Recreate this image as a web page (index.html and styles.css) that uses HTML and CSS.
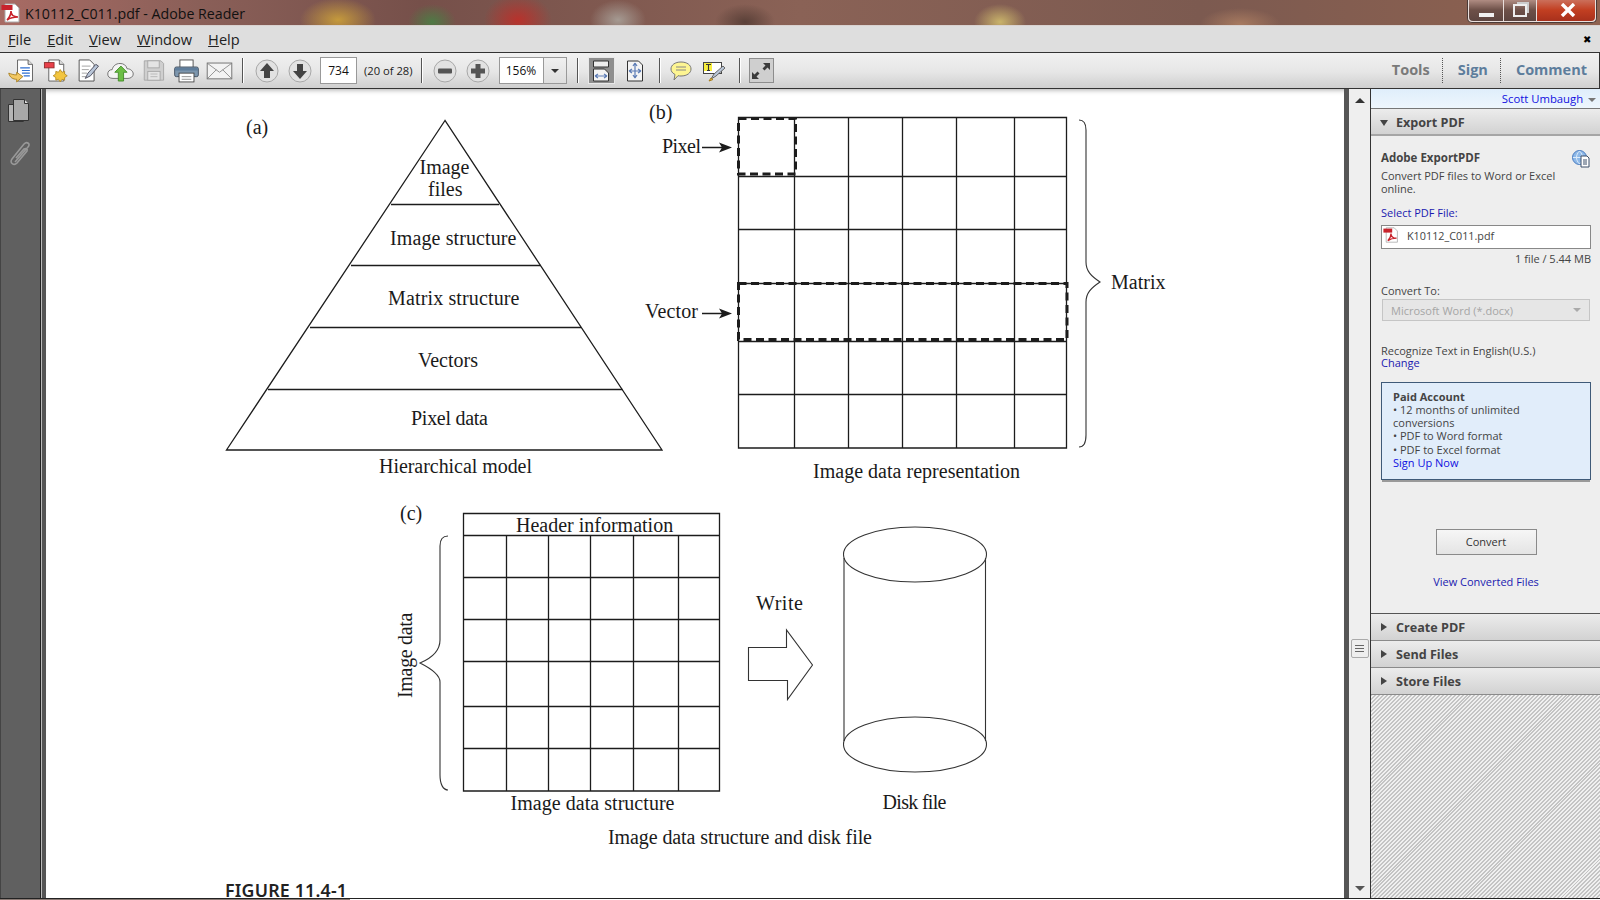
FILE: index.html
```html
<!DOCTYPE html>
<html lang="en">

<head>
  <meta charset="UTF-8" />
  <title>K10112_C011.pdf - Adobe Reader</title>
  <link rel="stylesheet" href="styles.css">
</head>

<body>
  <svg class="defs" width="0" height="0">
    <symbol id="pdf-icon" viewBox="0 0 20 20">
      <path d="M4 1h10l4 4v14H4z" fill="#fff" stroke="#aaa" />
      <rect x="0.5" y="2" width="11" height="5" fill="#c8232c" />
      <path d="M6 17c3-3 4-7 4-9 0 4 3 6 7 6-4 0-8 1-11 3z" fill="none" stroke="#c8232c" stroke-width="1.6" />
    </symbol>
  </svg>

  <div class="titlebar">
    <svg class="title-icon" width="20" height="22"><use href="#pdf-icon" /></svg>
    <span class="title-text">K10112_C011.pdf - Adobe Reader</span>
    <div class="winctl">
      <div class="winbtn min"><span class="min-bar"></span></div>
      <div class="winbtn max"><span class="max-box"></span></div>
      <div class="winbtn close">
        <svg width="20" height="14" viewBox="0 0 20 14"><path d="M4 1l12 12M16 1L4 13" stroke="#fff" stroke-width="3.4" /></svg>
      </div>
    </div>
  </div>

  <div class="menubar">
    <span><u>F</u>ile</span>
    <span><u>E</u>dit</span>
    <span><u>V</u>iew</span>
    <span><u>W</u>indow</span>
    <span><u>H</u>elp</span>
    <span class="menu-close">✖</span>
  </div>

  <div class="toolbar">
    <div class="tools tools-file">
      <div class="tool">
        <svg viewBox="0 0 33 30">
          <path d="M12 3h12l5 5v19H12z" fill="#fff" stroke="#555" />
          <path d="M24 3v5h5" fill="#ddd" stroke="#555" />
          <path d="M15 12h11M17 15h9M17 18h9M19 21h7" stroke="#2f6fd0" stroke-width="1.4" />
          <path d="M2 18c1 5 5 7 9 7v3l7-6-7-5v3c-4 0-6-1-9-2z" fill="#f2c862" stroke="#a67c1a" />
        </svg>
      </div>
      <div class="tool">
        <svg viewBox="0 0 33 30">
          <path d="M10 3h12l5 5v19H10z" fill="#fff" stroke="#555" />
          <path d="M22 3v5h5" fill="#ddd" stroke="#555" />
          <rect x="5" y="6" width="11" height="6" fill="#e8404a" stroke="#8d2a2a" />
          <path d="M23 14l2 3 3-1 0 3 3 2-3 2 0 3-3-1-2 3-2-3-3 1 0-3-3-2 3-2 0-3 3 1z" fill="#f3c53e" stroke="#b58a20" />
        </svg>
      </div>
      <div class="tool">
        <svg viewBox="0 0 33 30">
          <path d="M7 3h12l5 5v19H7z" fill="#fff" stroke="#444" />
          <path d="M10 10h10M10 14h8M10 18h6M10 22h5" stroke="#999" />
          <path d="M14 24l3-6 9-10 3 2-9 11z" fill="#b9c6d8" stroke="#445" />
        </svg>
      </div>
      <div class="tool">
        <svg viewBox="0 0 33 30">
          <path d="M8 24c-4 0-6-2-6-5s2-5 5-5c1-4 4-7 9-7 4 0 7 2 8 6 4 0 7 3 7 6s-3 5-6 5z" fill="#f4f4f4" stroke="#666" />
          <path d="M17 10l7 7h-4v10h-6V17h-4z" fill="#6cbe45" stroke="#3f8a25" />
        </svg>
      </div>
      <div class="tool">
        <svg viewBox="0 0 33 30">
          <path d="M6 4h19l3 3v19H6z" fill="#cfcfcf" stroke="#a5a5a5" />
          <rect x="10" y="4" width="13" height="8" fill="#e4e4e4" stroke="#a5a5a5" />
          <rect x="10" y="16" width="14" height="10" fill="#e4e4e4" stroke="#a5a5a5" />
          <path d="M13 19h8M13 22h8" stroke="#b5b5b5" />
        </svg>
      </div>
      <div class="tool">
        <svg viewBox="0 0 33 30">
          <rect x="9" y="3" width="15" height="9" fill="#fff" stroke="#444" />
          <rect x="3" y="11" width="27" height="11" rx="2" fill="#7d96ad" stroke="#3e4c5c" />
          <rect x="3.500" y="12" width="26" height="3" fill="#5f7d9b" />
          <rect x="8" y="18" width="17" height="10" fill="#fff" stroke="#444" />
          <path d="M11 22h11M11 25h11" stroke="#888" />
        </svg>
      </div>
      <div class="tool">
        <svg viewBox="0 0 33 30">
          <rect x="2.500" y="6.500" width="28" height="18" fill="#f3f3f3" stroke="#666" />
          <path d="M3 7l13.500 10L30 7M3 24l10-10M30 24L20 14" fill="none" stroke="#888" />
        </svg>
      </div>
    </div>
    <span class="sep sep-first"></span>
    <div class="tools">
      <div class="tool">
        <svg width="24" height="24" viewBox="0 0 24 24">
          <circle cx="12" cy="12" r="11" fill="#e2e2e2" stroke="#a8a8a8" />
          <path d="M12 4l7 8h-4v7H9v-7H5z" fill="#444" />
        </svg>
      </div>
      <div class="tool">
        <svg width="24" height="24" viewBox="0 0 24 24">
          <circle cx="12" cy="12" r="11" fill="#e2e2e2" stroke="#a8a8a8" />
          <path d="M12 20l7-8h-4V5H9v7H5z" fill="#444" />
        </svg>
      </div>
    </div>
    <div class="field page-field">734</div>
    <span class="page-count">(20 of 28)</span>
    <span class="sep sep-count"></span>
    <div class="tools">
      <div class="tool">
        <svg width="24" height="24" viewBox="0 0 24 24">
          <circle cx="12" cy="12" r="11" fill="#e2e2e2" stroke="#a8a8a8" />
          <rect x="5" y="9.500" width="14" height="5" rx="1" fill="#555" />
        </svg>
      </div>
      <div class="tool">
        <svg width="24" height="24" viewBox="0 0 24 24">
          <circle cx="12" cy="12" r="11" fill="#e2e2e2" stroke="#a8a8a8" />
          <path d="M9.500 5h5v4.500H19v5h-4.500V19h-5v-4.500H5v-5h4.500z" fill="#555" />
        </svg>
      </div>
    </div>
    <div class="field zoom-field">
      <span class="zoom-value">156%</span>
      <span class="zoom-drop"></span>
    </div>
    <span class="sep sep-zoom"></span>
    <div class="tool-box active">
      <svg width="18" height="22" viewBox="0 0 18 22">
        <path d="M1.500 1h15v6h-15z" fill="#eee" stroke="#333" />
        <path d="M1.500 9h11l4 4v8h-15z" fill="#f4f4f4" stroke="#333" />
        <path d="M3 16h12M3 16l3-2M3 16l3 2M15 16l-3-2M15 16l-3 2" stroke="#5b7bb5" stroke-width="1.2" fill="none" />
      </svg>
    </div>
    <div class="tool-box fit-page">
      <svg width="18" height="22" viewBox="0 0 18 22">
        <path d="M1.500 1h11l4 4v16h-15z" fill="#f4f4f4" stroke="#333" />
        <path d="M9 3v15M3 11h12M9 3L7 6M9 3l2 3M9 18l-2-3M9 18l2-3M3 11l3-2M3 11l3 2M15 11l-3-2M15 11l-3 2" stroke="#5b7bb5" stroke-width="1.2" fill="none" />
      </svg>
    </div>
    <span class="sep sep-fit"></span>
    <div class="tools">
      <div class="tool">
        <svg width="24" height="22" viewBox="0 0 24 22">
          <path d="M12 2c6 0 10 3 10 7s-4 7-10 7c-1 0-2 0-3-.3L5 20l1-5.500C3 13 2 11 2 9c0-4 4-7 10-7z" fill="#fdf592" stroke="#777" />
          <path d="M7 7h10M7 10h10" stroke="#888" />
        </svg>
      </div>
      <div class="tool">
        <svg width="24" height="22" viewBox="0 0 24 22">
          <rect x="1.500" y="2.500" width="18" height="11" fill="#fff" stroke="#444" />
          <rect x="2" y="3" width="8" height="8" fill="#f7ee3e" />
          <path d="M4 4.500h5M6.500 4.500v6M5 10.500h3" stroke="#333" stroke-width="1.100" fill="none" />
          <path d="M9 19l3-5 9-8 2 2-9 8z" fill="#b9c6d8" stroke="#666" />
          <path d="M7 21l4-1.500-2-1.500z" fill="#eec44a" stroke="#a67c1a" />
        </svg>
      </div>
    </div>
    <span class="sep sep-note"></span>
    <div class="tool-box expand">
      <svg width="22" height="22" viewBox="0 0 22 22">
        <path d="M13 3h7v7l-2.500-2.500-3 3-2-2 3-3zM9 19H2v-7l2.500 2.500 3-3 2 2-3 3z" fill="#3b3b3b" />
      </svg>
    </div>
    <div class="tabs">
      <span class="tab tab-tools">Tools</span>
      <span class="tab">Sign</span>
      <span class="tab">Comment</span>
    </div>
  </div>

  <div class="main">
    <div class="rail">
      <svg width="30" height="30" viewBox="0 0 30 30">
        <path d="M2.500 7.500h15v17h-15z" fill="#b5b5b5" stroke="#333" />
        <path d="M7.500 2.500h11l4 4v17h-15z" fill="#a8a8a8" stroke="#333" />
        <path d="M18.500 2.500v4h4" fill="#ddd" stroke="#333" />
      </svg>
      <svg width="24" height="28" viewBox="0 0 24 28">
        <path d="M6 22L19 7c3-3-1-6-4-3L3 19c-3 4 2 7 5 4l10-12c1-2-1-3-3-2L7 18" fill="none" stroke="#999" stroke-width="1.600" />
      </svg>
    </div>
    <div class="gutter"></div>

    <div class="page">
      <svg class="figure" width="1298" height="809" viewBox="46 89 1298 809">
        <g class="ink">
          <path d="M445 120.500L226.500 450H662z" />
          <path d="M391 204.500H499M351 265.500H540.500M310 327.500H581M268 389.500H622.500" />

          <path d="M738.500 117.500H1066.500V448H738.500z" />
          <path d="M794.500 118V448M848.500 118V448M902.500 118V448M956.500 118V448M1014.500 118V448" />
          <path d="M739 176.500H1066M739 229.500H1066M739 283.500H1066M739 341.500H1066M739 394.500H1066" />
          <path class="dash" d="M738.500 118.500H795.500V174H738.500z" />
          <path class="dash" d="M738.500 283.500H1067V339.500H738.500z" />

          <path d="M702 147.500H725M702 313.500H725" />
          <path class="head" d="M732 147.500L719 142.500L722 147.500L719 152.500zM732 313.500L719 308.500L722 313.500L719 318.500z" />

          <path class="thin" d="M1079 120c5 0 7 3 7 10V262c0 9 5 14 14 20-9 6-14 11-14 20V435c0 7-2 12-7 12" />

          <path d="M463.500 513.500H719.500V791H463.500z" />
          <path d="M464 535.500H719M464 577.500H719M464 619.500H719M464 661.500H719M464 706.500H719M464 748.500H719" />
          <path d="M506.500 536V791M548.500 536V791M590.500 536V791M633.500 536V791M678.500 536V791" />

          <path class="thin" d="M448 536c-5 0-8 3-8 10V640c0 10-8 18-20 23 12 6 20 12 20 19V775c0 9 3 15 8 15" />

          <path class="thin" d="M748.500 647.500H786.500V630L812.500 665L787.500 699.500V680.500H748.500z" />

          <ellipse class="thin" cx="915" cy="554.500" rx="71.500" ry="27.500" />
          <ellipse class="thin" cx="915" cy="744.500" rx="71.500" ry="27.500" />
          <path class="thin" d="M844 558V741M985.500 558V741" />
        </g>

        <g class="fig-text">
          <text x="246" y="134">(a)</text>
          <text x="419.500" y="174">Image</text>
          <text x="428" y="196">files</text>
          <text x="390" y="245" textLength="126.500">Image structure</text>
          <text x="388" y="305" textLength="131.500">Matrix structure</text>
          <text x="418" y="367">Vectors</text>
          <text x="411" y="425" textLength="77">Pixel data</text>
          <text x="379" y="473" textLength="153">Hierarchical model</text>
          <text x="649" y="119">(b)</text>
          <text x="662" y="153" textLength="39">Pixel</text>
          <text x="645" y="318" textLength="53">Vector</text>
          <text x="1111" y="289">Matrix</text>
          <text x="813" y="478" textLength="207">Image data representation</text>
          <text x="400" y="520">(c)</text>
          <text x="516" y="532">Header information</text>
          <text x="756" y="610" textLength="47">Write</text>
          <text x="411.500" y="698" textLength="85.500" transform="rotate(-90 411.500 698)">Image data</text>
          <text x="510.500" y="810" textLength="164">Image data structure</text>
          <text x="882.500" y="809" textLength="64">Disk file</text>
          <text x="608" y="844" textLength="264">Image data structure and disk file</text>
          <text class="fig-caption" x="225" y="896.500" textLength="122">FIGURE 11.4-1</text>
        </g>
      </svg>
    </div>

    <div class="gutter-right"></div>
    <div class="scrollbar">
      <span class="arrow-up"></span>
      <span class="thumb"><i></i><i></i><i></i></span>
      <span class="arrow-down"></span>
    </div>

    <div class="pane">
      <div class="userbar">Scott Umbaugh <span class="user-drop"></span></div>
      <div class="pane-head open"><span class="tri-down"></span>Export PDF</div>
      <div class="export">
        <div class="export-title">
          <b>Adobe ExportPDF</b>
          <svg width="18" height="18" viewBox="0 0 18 18">
            <circle cx="7.500" cy="7.500" r="7" fill="#8db8e8" stroke="#4a7cc0" />
            <path d="M1 7.500h13M7.500 1c-4 4-4 9 0 13M7.500 1c4 4 4 9 0 13" fill="none" stroke="#dcebfa" />
            <path d="M9 6h6l2 2v9H9z" fill="#fff" stroke="#3d4f68" />
            <path d="M11 10h4M11 12h4M11 14h4" stroke="#3d4f68" />
          </svg>
        </div>
        <p class="desc">Convert PDF files to Word or Excel<br>online.</p>
        <p class="link select-label">Select PDF File:</p>
        <div class="file-box">
          <svg width="16" height="16"><use href="#pdf-icon" /></svg>
          <span>K10112_C011.pdf</span>
        </div>
        <p class="file-size">1 file / 5.44 MB</p>
        <p class="convert-label">Convert To:</p>
        <div class="format-box">Microsoft Word (*.docx)<span class="format-drop"></span></div>
        <p class="recognize">Recognize Text in English(U.S.)</p>
        <p class="link change">Change</p>
        <div class="paid">
          <b>Paid Account</b>
          <p>• 12 months of unlimited<br>conversions</p>
          <p>• PDF to Word format</p>
          <p class="paid-last">• PDF to Excel format</p>
          <p class="signup">Sign Up Now</p>
        </div>
        <div class="convert-btn">Convert</div>
        <p class="link view-files">View Converted Files</p>
      </div>
      <div class="pane-head"><span class="tri-right"></span>Create PDF</div>
      <div class="pane-head"><span class="tri-right"></span>Send Files</div>
      <div class="pane-head"><span class="tri-right"></span>Store Files</div>
      <div class="hatch"></div>
    </div>
  </div>
  <div class="taskbar-edge"></div>
</body>

</html>
```

FILE: styles.css
```css
* {
  margin: 0;
  padding: 0;
  box-sizing: border-box;
}

html, body {
  width: 1600px;
  height: 900px;
  overflow: hidden;
  background: #fff;
  font-family: "Open Sans", "Noto Sans", sans-serif;
}

body {
  display: flex;
  flex-direction: column;
}

.defs {
  position: absolute;
}

/* window caption over the blurred wallpaper */
.titlebar {
  height: 26px;
  display: flex;
  align-items: center;
  border-bottom: 1px solid #d9d2d0;
  background:
    radial-gradient(ellipse 38px 22px at 338px 20px, #c59a3c, transparent),
    radial-gradient(ellipse 24px 18px at 432px 22px, #4f7a45, transparent),
    radial-gradient(ellipse 34px 26px at 518px 20px, #b8322c, transparent),
    radial-gradient(ellipse 28px 20px at 618px 20px, #a59a92, transparent),
    radial-gradient(ellipse 30px 18px at 745px 22px, #5a4038, transparent),
    radial-gradient(ellipse 26px 18px at 1000px 22px, #c9b36a, transparent),
    radial-gradient(ellipse 40px 16px at 1240px 24px, #a77a60, transparent),
    linear-gradient(90deg, #a86b64 0, #8a5f58 200px, #76504a 420px, #8a6256 800px, #7c5a50 1200px, #8f6250 1600px);
}

.title-icon {
  margin-left: 1px;
}

.title-text {
  margin: 1px 0 0 4px;
  font-size: 14.200px;
  color: #111;
}

.winctl {
  margin-left: auto;
  margin-right: 3px;
  margin-top: -3px;
  height: 24px;
  display: flex;
  gap: 1px;
  padding: 0 1px 1px;
  background: #eadfdc;
  border: 1px solid #4a3a36;
  border-top: 0;
  border-radius: 0 0 5px 5px;
}

.winbtn {
  display: flex;
  align-items: center;
  justify-content: center;
}

.winbtn.min {
  width: 34px;
  background: linear-gradient(#b69288, #6d5048 50%, #5d4540);
  border-radius: 0 0 0 4px;
}

.min-bar {
  width: 15px;
  height: 4px;
  margin-top: 9px;
  background: #f0f0f0;
}

.winbtn.max {
  width: 32px;
  background: linear-gradient(#b69288, #6d5048 50%, #5d4540);
}

.max-box {
  width: 14px;
  height: 13px;
  border: 2px solid #eee;
  box-shadow: 3px -3px 0 -1px #ccc;
}

.winbtn.close {
  width: 58px;
  padding-left: 4px;
  background: linear-gradient(#cc7460, #c23f22 50%, #a8301c);
  border-radius: 0 0 4px 0;
}

.menubar {
  height: 26px;
  display: flex;
  align-items: center;
  gap: 16px;
  padding: 0 9px 0 8px;
  background: #dedede;
  font-size: 14.600px;
  color: #222;
}

.menu-close {
  margin-left: auto;
  font-size: 10px;
  color: #000;
}

.toolbar {
  height: 37px;
  display: flex;
  align-items: center;
  padding-left: 5px;
  background: linear-gradient(#f1f1f1, #e6e6e6 55%, #cfcfcf);
  border-top: 1px solid #333;
  border-bottom: 1px solid #333;
  border-right: 1px solid #333;
}

.tools {
  display: flex;
}

.tool {
  width: 33px;
  height: 30px;
  display: flex;
  align-items: center;
  justify-content: center;
}

.tools-file svg {
  width: 29px;
  height: 27px;
}

.sep {
  width: 2px;
  height: 25px;
  background: #555;
  border-right: 1px solid #fff;
}

.sep-first { margin: 0 6px 0 6px; }
.sep-count { margin: 0 6px 0 8px; }
.sep-zoom { margin: 0 9px 0 10px; }
.sep-fit { margin: 0 4px 0 10px; }
.sep-note { margin: 0 8px 0 8px; }

.field {
  height: 27px;
  background: #fff;
  border: 1px solid #fff;
  outline: 1px solid #999;
  outline-offset: -1px;
  font-size: 12px;
  color: #111;
}

.page-field {
  width: 37px;
  margin-left: 4px;
  line-height: 25px;
  text-align: center;
}

.page-count {
  margin-left: 7px;
  font-size: 11.200px;
  color: #222;
  white-space: nowrap;
}

.zoom-field {
  width: 68px;
  margin-left: 4px;
  display: flex;
  line-height: 25px;
}

.zoom-value {
  flex: 1;
  text-align: center;
  border-right: 1px solid #999;
}

.zoom-drop {
  width: 22px;
  background: linear-gradient(#f0f0f0, #dedede);
  position: relative;
}

.zoom-drop::after {
  content: "";
  position: absolute;
  left: 7px;
  top: 11px;
  border: 4px solid transparent;
  border-top: 4px solid #333;
}

.tool-box {
  width: 27px;
  height: 27px;
  display: flex;
  align-items: center;
  justify-content: center;
}

.tool-box.active {
  background: #8e8e8e;
  border: 1px solid #e8e8e8;
}

.fit-page {
  margin-left: 7px;
}

.tool-box.expand {
  width: 25px;
  height: 25px;
  background: #cfcfcf;
  border: 1px solid #8d8d8d;
}

.tabs {
  margin-left: auto;
  height: 100%;
  display: flex;
  align-items: center;
}

.tab {
  height: 25px;
  padding: 0 12px 0 15px;
  border-right: 1px dotted #555;
  font-size: 14.500px;
  font-weight: 700;
  line-height: 24px;
  color: #5d7d9c;
}

.tab:last-child {
  border-right: 0;
}

.tab-tools {
  color: #7a7a7a;
}

.main {
  flex: 1;
  min-height: 0;
  display: flex;
}

.rail {
  width: 42px;
  display: flex;
  flex-direction: column;
  align-items: center;
  gap: 13px;
  padding: 8px 0 0 0;
  background: #606060;
  border-left: 1px solid #444;
  border-right: 1px solid #bbb;
  box-shadow: inset -1px 0 0 #222;
}

.gutter {
  width: 4px;
  background: #555;
}

.page {
  width: 1298px;
  background: #fff;
  overflow: hidden;
  box-shadow: inset 0 6px 5px -5px #aaa;
}

.figure {
  display: block;
}

.ink path, .ink ellipse {
  fill: none;
  stroke: #1c1c1c;
  stroke-width: 1.300;
}

.ink .thin {
  stroke: #333;
  stroke-width: 1.100;
}

.ink .dash {
  stroke-width: 3;
  stroke-dasharray: 8 4.500;
}

.ink .head {
  fill: #1c1c1c;
  stroke: none;
}

.fig-text text {
  font-family: "Liberation Serif", serif;
  font-size: 20px;
  fill: #1a1a1a;
}

.fig-text .fig-caption {
  font-family: "Noto Sans", sans-serif;
  font-size: 17.800px;
  font-weight: 600;
  fill: #222;
}

.gutter-right {
  width: 5px;
  background: #555;
}

.scrollbar {
  width: 21px;
  display: flex;
  flex-direction: column;
  align-items: center;
  background: #efefef;
}

.arrow-up, .arrow-down {
  width: 0;
  height: 0;
  border-left: 5px solid transparent;
  border-right: 5px solid transparent;
}

.arrow-up {
  margin-top: 9px;
  border-bottom: 5px solid #333;
}

.arrow-down {
  margin-top: 228px;
  border-top: 5px solid #555;
}

.thumb {
  width: 18px;
  height: 19px;
  margin-top: 536px;
  display: flex;
  flex-direction: column;
  align-items: center;
  justify-content: center;
  gap: 2px;
  background: #eee;
  border: 1px solid #aaa;
  border-radius: 2px;
}

.thumb i {
  width: 9px;
  height: 1px;
  background: #666;
}

.pane {
  flex: 1;
  display: flex;
  flex-direction: column;
  background: #eee;
  border-left: 1px solid #333;
  font-size: 11px;
  line-height: 13px;
  color: #444;
}

.userbar {
  height: 20px;
  flex: none;
  padding: 1px 4px 0 0;
  text-align: right;
  font-size: 11.300px;
  line-height: 18px;
  color: #1010e0;
  background: linear-gradient(#dfeefb, #eef6fd);
  border-bottom: 1px solid #777;
}

.user-drop {
  display: inline-block;
  margin-left: 2px;
  vertical-align: middle;
  border: 4px solid transparent;
  border-top: 4px solid #777;
  border-bottom: 0;
}

.pane-head {
  height: 27px;
  flex: none;
  display: flex;
  align-items: center;
  font-size: 12.600px;
  font-weight: 700;
  color: #444;
  background: linear-gradient(#ececec, #d2d2d2);
  border-bottom: 1px solid #8a8a8a;
}

.pane-head.open {
  padding-top: 1px;
  border-bottom: 2px solid #a5a5a5;
}

.tri-down {
  margin: 2px 8px 0 9px;
  border: 4px solid transparent;
  border-top: 6px solid #444;
  border-bottom: 0;
}

.tri-right {
  margin: 0 9px 0 10px;
  border: 4px solid transparent;
  border-left: 6px solid #444;
  border-right: 0;
}

.export {
  height: 478px;
  flex: none;
  padding: 15px 9px 0 10px;
  border-bottom: 1px solid #555;
}

.export-title {
  height: 13px;
  display: flex;
  justify-content: space-between;
  font-size: 11.500px;
}

.export-title svg {
  margin: -1px 1px 0 0;
}

.desc {
  margin-top: 5px;
}

.link {
  color: #1a1ab0;
}

.select-label {
  margin-top: 11px;
}

.file-box {
  height: 24px;
  margin-top: 6px;
  display: flex;
  align-items: center;
  gap: 8px;
  padding: 0 0 4px 1px;
  font-size: 10.800px;
  background: #fff;
  border: 1px solid #888;
}

.file-size {
  margin-top: 3px;
  text-align: right;
}

.convert-label {
  margin-top: 19px;
}

.format-box {
  height: 22px;
  margin: 2px 1px 0;
  display: flex;
  align-items: center;
  justify-content: space-between;
  padding: 0 8px;
  color: #a5a5a5;
  background: #e6e6e6;
  border: 1px solid #c5c5c5;
}

.format-drop {
  border: 4px solid transparent;
  border-top: 4px solid #aaa;
  border-bottom: 0;
}

.recognize {
  margin-top: 24px;
  line-height: 12px;
}

.change {
  line-height: 11px;
}

.paid {
  height: 98px;
  margin-top: 14px;
  padding: 7px 11px 0;
  background: #e1edfa;
  border: 1px solid #3f5a78;
  box-shadow: 0 3px 0 -1px #999;
}

.paid-last {
  margin-top: 1px;
}

.signup {
  color: #1010e0;
}

.convert-btn {
  width: 101px;
  height: 26px;
  margin: 49px auto 0;
  text-align: center;
  line-height: 24px;
  color: #333;
  background: linear-gradient(#f6f6f6, #e4e4e4);
  border: 1px solid #8a8a8a;
}

.view-files {
  margin-top: 20px;
  text-align: center;
}

.hatch {
  flex: 1;
  background: repeating-linear-gradient(135deg, #c4c4c4 0, #c4c4c4 1.400px, #f0f0f0 1.400px, #f0f0f0 2.800px);
}

.taskbar-edge {
  height: 2px;
  background: linear-gradient(90deg, #8a7a74 350px, #fff 350px);
  border-top: 1px solid #222;
}
```
